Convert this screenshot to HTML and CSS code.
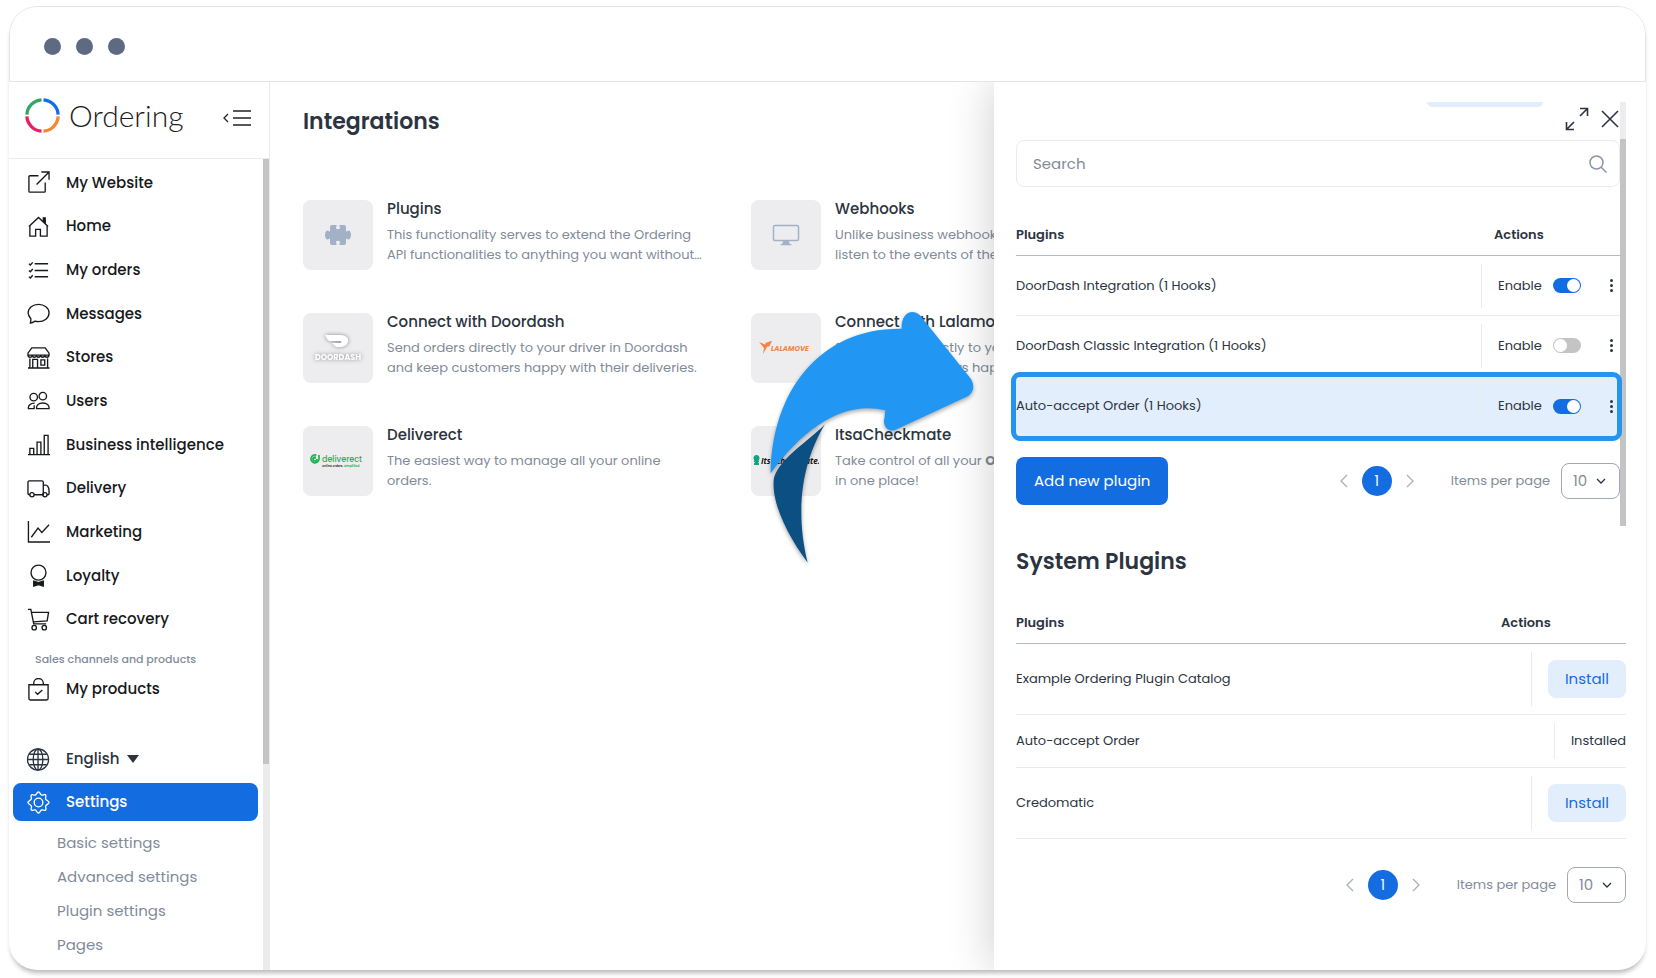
FILE: index.html
```
<!DOCTYPE html>
<html lang="en">
<head>
    <meta charset="UTF-8">
    <meta name="viewport" content="width=device-width, initial-scale=1.0">
    <title>Ordering - Integrations</title>
    <link rel="stylesheet" href="styles.css">
</head>
<body>
    <div class="window">
        <div class="titlebar">
            <span class="dot"></span>
            <span class="dot"></span>
            <span class="dot"></span>
        </div>
        <div class="app">
            <aside class="sidebar">
                <div class="brand">
                    <svg class="brand-mark" viewBox="0 0 36 36" fill="none" stroke-width="3.4">
                        <path d="M1.9 17A16.2 16.2 0 0 1 17 1.9" stroke="#34a567"/>
                        <path d="M19 1.9A16.2 16.2 0 0 1 34.1 17" stroke="#146de8"/>
                        <path d="M34.1 19A16.2 16.2 0 0 1 19 34.1" stroke="#f58634"/>
                        <path d="M17 34.1A16.2 16.2 0 0 1 1.9 19" stroke="#e91e63"/>
                    </svg>
                    <span class="brand-name">Ordering</span>
                    <button class="icon-btn collapse" aria-label="Collapse menu">
                        <svg width="28" height="16" viewBox="0 0 28 16" fill="none" stroke="#222" stroke-width="1.3"><path d="M5 4L1 8l4 4M10 1h18M10 8h18M10 15h18"/></svg>
                    </button>
                </div>
                <nav class="menu">
                    <ul class="menu-list">
                        <li><a href="#"><svg viewBox="0 0 24 24"><path d="M12 5H3a1 1 0 0 0-1 1v15a1 1 0 0 0 1 1h15a1 1 0 0 0 1-1v-9M15 1h8v8M23 1L10 14"/></svg>My Website</a></li>
                        <li><a href="#"><svg viewBox="0 0 24 24"><path d="M3 11v11h6v-7h5v7h7V11M2 12L12 2.500l10 9.500"/><path d="M17 3h2v5l-2-2z" fill="currentColor"/></svg>Home</a></li>
                        <li><a href="#"><svg viewBox="0 0 24 24"><path d="M8 5h14M8 12h14M8 18.500h14M2 5l1.500 1.300L6 3.500M2 12l1.500 1.300L6 10.500M2 18.500l1.500 1.300L6 17"/></svg>My orders</a></li>
                        <li><a href="#"><svg viewBox="0 0 24 24"><path d="M3.500 22c.3-1.700.8-3 .5-4.500C2.400 15.600 1.200 13.500 1.200 11.500 1.200 6.300 6 2.500 12 2.500s11 3.800 11 9-5 9-11 9c-1.200 0-2.400-.2-3.500-.5-1.500.9-3 1.800-5 2z"/></svg>Messages</a></li>
                        <li><a href="#"><svg viewBox="0 0 24 24"><path d="M5 2h14l4 5.500v2H1v-2zM1 9.500c0 3 4.400 3 4.400 0 0 3 4.400 3 4.400 0 0 3 4.400 3 4.400 0 0 3 4.400 3 4.400 0 0 3 4.400 3 4.400 0M3 13v10M21.500 13v10M1 23h22.500M6 23v-9h5v9M14.500 14.500h4V20h-4z"/></svg>Stores</a></li>
                        <li><a href="#"><svg viewBox="0 0 24 24"><circle cx="7" cy="8.500" r="3.900"/><circle cx="16.500" cy="7.500" r="3.900"/><path d="M8 20.500H1.500C1 17 3.500 14.800 8 14.800M10 20.500c-.5-3.700 2.400-5.900 6.500-5.900s7 2.200 6.500 5.900zM7.500 20.500V17"/></svg>Users</a></li>
                        <li><a href="#"><svg viewBox="0 0 24 24"><path d="M1 22.500h23M3 22.500v-6.500h4v6.500M10.500 22.500V9.500h4v13M18 22.500V2.500h4v20"/></svg>Business intelligence</a></li>
                        <li><a href="#"><svg viewBox="0 0 24 24"><path d="M3 18.500H2.500A1.500 1.500 0 0 1 1 17V5.500A1.500 1.500 0 0 1 2.500 4h13A1.500 1.500 0 0 1 17 5.500v13H7.500M17 8.500h2.500c2 0 3.500 3 3.500 5.500v3.500a1 1 0 0 1-1 1h-1"/><circle cx="5.200" cy="18.500" r="2.200"/><circle cx="18.700" cy="18.500" r="2.200"/></svg>Delivery</a></li>
                        <li><a href="#"><svg viewBox="0 0 24 24"><path d="M1.500 1v22H24M4.500 18l7-9.500 4 4.500L23 5"/></svg>Marketing</a></li>
                        <li><a href="#"><svg viewBox="0 0 24 24"><circle cx="12" cy="9" r="7.800"/><path d="M7 18l5 1.500 5-1.500v5l-5-1.500L7 23z" fill="currentColor"/></svg>Loyalty</a></li>
                        <li><a href="#"><svg viewBox="0 0 24 24"><path d="M1 1.500h3l3 15h13M4.800 4.500h17.700l-1.500 9L6.500 14.500"/><circle cx="7.500" cy="20.500" r="2.300"/><circle cx="18" cy="20.500" r="2.300"/></svg>Cart recovery</a></li>
                    </ul>
                    <p class="menu-label">Sales channels and products</p>
                    <a class="menu-link" href="#"><svg viewBox="0 0 24 24"><path d="M2 7h20v14.500a1.500 1.500 0 0 1-1.500 1.500h-17A1.500 1.500 0 0 1 2 21.500zM7 7V5.500a5 5 0 0 1 10 0V7M8.500 14.500l2.500 2.500 5-4.500"/></svg>My products</a>
                    <button class="menu-link language"><svg viewBox="0 0 24 24"><circle cx="11.500" cy="12" r="11"/><ellipse cx="11.500" cy="12" rx="5" ry="11"/><path d="M11.500 1v22M.5 12h22M2.500 6.500h18M2.500 17.500h18"/></svg>English<span class="caret"></span></button>
                    <a class="menu-link active" href="#"><svg viewBox="0 0 24 24"><circle cx="12" cy="12" r="4.500"/><path d="M12 1c1.600 0 1.700 2.600 3.200 3.200s3-1.300 4.200-.2-.6 2.800 0 4.300S23 10.200 23 12s-2.800 2-3.500 3.600 1.300 3-.1 4.200-2.700-.7-4.200 0S13.700 23 12 23s-1.800-2.600-3.300-3.200-2.900 1.200-4.100 0 .7-2.700 0-4.200S1 13.700 1 12s2.800-2 3.500-3.600-1.200-3 0-4.200 2.700.7 4.200 0S10.400 1 12 1z"/></svg>Settings</a>
                    <ul class="submenu">
                        <li><a href="#">Basic settings</a></li>
                        <li><a href="#">Advanced settings</a></li>
                        <li><a href="#">Plugin settings</a></li>
                        <li><a href="#">Pages</a></li>
                    </ul>
                    <div class="menu-scroll"><span></span></div>
                </nav>
            </aside>

            <main class="content">
                <h1>Integrations</h1>
                <div class="cards">
                    <article class="card">
                        <div class="thumb">
                            <svg width="26" height="22" viewBox="0 0 26 22" fill="#a3b1c6"><path d="M7 1h4.500v1.500c-1 .8-.7 2.800 1.500 2.800s2.500-2 1.500-2.800V1H19a2 2 0 0 1 2 2v4.500c.8.300 1.300-1 2.500-1S26 8.500 26 11s-1.300 4.500-2.500 4.500-1.700-1.300-2.500-1V19a2 2 0 0 1-2 2h-4.500v-1.500c1-.8.7-2.800-1.500-2.800s-2.500 2-1.500 2.800V21H7a2 2 0 0 1-2-2v-4.500c-.8-.3-1.300 1-2.500 1S0 13.500 0 11s1.300-4.500 2.500-4.500 1.700 1.300 2.500 1V3a2 2 0 0 1 2-2z"/></svg>
                        </div>
                        <div class="card-text">
                            <h2>Plugins</h2>
                            <p>This functionality serves to extend the Ordering<br>API functionalities to anything you want without…</p>
                        </div>
                    </article>
                    <article class="card">
                        <div class="thumb">
                            <svg width="28" height="22" viewBox="0 0 28 22"><rect x="1.500" y="1.500" width="25" height="15" rx="1.500" fill="none" stroke="#a3b1c6" stroke-width="1.500"/><path d="M11 17h6l.5 2.500 2 1v.8h-11v-.8l2-1z" fill="#a3b1c6"/></svg>
                        </div>
                        <div class="card-text">
                            <h2>Webhooks</h2>
                            <p>Unlike business webhooks<br>listen to the events of the</p>
                        </div>
                    </article>
                    <article class="card">
                        <div class="thumb">
                            <svg class="doordash" width="54" height="30" viewBox="0 0 54 30"><path d="M14 2h15c6 0 9 3 8 7-1 3-4 5-8 5h-3c-2 0-3-2-5-4h8c2 0 2-2 0-2H19c-2 0-3-2-5-6z"/><text x="27" y="27" text-anchor="middle">DOORDASH</text></svg>
                        </div>
                        <div class="card-text">
                            <h2>Connect with Doordash</h2>
                            <p>Send orders directly to your driver in Doordash<br>and keep customers happy with their deliveries.</p>
                        </div>
                    </article>
                    <article class="card">
                        <div class="thumb">
                            <svg class="lalamove" width="54" height="16" viewBox="0 0 54 16"><path d="M0 2l6 2.500L12 1l-1 4-3 2-4 7 1-6zM6 3l7-2-3 6z"/><text x="12" y="11">LALAMOVE</text></svg>
                        </div>
                        <div class="card-text">
                            <h2>Connect with Lalamove</h2>
                            <p>Send orders directly to your<br>and keep customers happy</p>
                        </div>
                    </article>
                    <article class="card">
                        <div class="thumb">
                            <svg class="deliverect" width="56" height="14" viewBox="0 0 56 14"><path d="M6.500 1.200A4 4 0 1 0 9 5V1M7 5a2 2 0 1 1-2-2v2" fill="none" stroke="#1fb254" stroke-width="1.700"/><text class="name" x="12" y="8">deliverect</text><text class="tag" x="12" y="13">Online orders. <tspan>Simplified.</tspan></text></svg>
                        </div>
                        <div class="card-text">
                            <h2>Deliverect</h2>
                            <p>The easiest way to manage all your online<br>orders.</p>
                        </div>
                    </article>
                    <article class="card">
                        <div class="thumb">
                            <svg class="checkmate" width="66" height="14" viewBox="0 0 66 14"><path d="M1 11h5v-1.500L5 8h1V6.500H5.200A3 3 0 1 0 1.800 6.500H1V8h1L1 9.500z" fill="#12a383"/><text x="8" y="10">ItsaCheckmate.</text></svg>
                        </div>
                        <div class="card-text">
                            <h2>ItsaCheckmate</h2>
                            <p>Take control of all your <b>Orders</b><br>in one place!</p>
                        </div>
                    </article>
                </div>
            </main>

            <svg class="arrow" width="205" height="255" viewBox="150 390 615 765">
                <path d="M315 730C260 820 218 960 263 1145C200 1060 152 960 162 890C182 830 260 785 315 730z" fill="#0b4f83"/>
                <path d="M152 877C155 630 300 440 545 443C543 400 573 380 600 403L750 590C766 610 762 637 740 647L525 747C505 755 487 735 493 713L496 688C375 658 255 735 152 877z" fill="#2196f3"/>
            </svg>

            <section class="drawer">
                <div class="drawer-tools">
                    <button class="icon-btn" aria-label="Expand">
                        <svg width="24" height="24" viewBox="0 0 24 24" fill="none" stroke="#2c3440" stroke-width="1.600"><path d="M15 1.500h7.500V9M22.500 1.500L15 9M1.500 15v7.500H9M1.500 22.500L9 15"/></svg>
                    </button>
                    <button class="icon-btn" aria-label="Close">
                        <svg width="18" height="18" viewBox="0 0 18 18" fill="none" stroke="#2c3440" stroke-width="1.600"><path d="M1 1l16 16M17 1L1 17"/></svg>
                    </button>
                </div>
                <div class="scroll-area">
                    <div class="scroll-body">
                        <div class="chip"></div>
                        <label class="search">
                            <input type="text" placeholder="Search" aria-label="Search plugins">
                            <svg width="18" height="18" viewBox="0 0 18 18" fill="none" stroke="#8d97a5" stroke-width="1.500"><circle cx="7.500" cy="7.500" r="6.500"/><path d="M12 12l5.500 5.500"/></svg>
                        </label>
                        <table class="plugins">
                            <thead>
                                <tr><th>Plugins</th><th class="actions">Actions</th></tr>
                            </thead>
                            <tbody>
                                <tr>
                                    <td>DoorDash Integration (1 Hooks)</td>
                                    <td><div class="row-actions"><label for="p1">Enable</label><input id="p1" class="switch" type="checkbox" checked><button class="icon-btn more" aria-label="More"><i></i><i></i><i></i></button></div></td>
                                </tr>
                                <tr>
                                    <td>DoorDash Classic Integration (1 Hooks)</td>
                                    <td><div class="row-actions"><label for="p2">Enable</label><input id="p2" class="switch" type="checkbox"><button class="icon-btn more" aria-label="More"><i></i><i></i><i></i></button></div></td>
                                </tr>
                                <tr class="highlight">
                                    <td>Auto-accept Order (1 Hooks)</td>
                                    <td><div class="row-actions"><label for="p3">Enable</label><input id="p3" class="switch" type="checkbox" checked><button class="icon-btn more" aria-label="More"><i></i><i></i><i></i></button></div></td>
                                </tr>
                            </tbody>
                        </table>
                        <div class="table-footer">
                            <button class="btn-primary">Add new plugin</button>
                            <div class="pager">
                                <button class="icon-btn" aria-label="Previous"><svg width="8" height="14" viewBox="0 0 8 14"><path d="M7 1L1 7l6 6"/></svg></button>
                                <button class="page">1</button>
                                <button class="icon-btn" aria-label="Next"><svg width="8" height="14" viewBox="0 0 8 14"><path d="M1 1l6 6-6 6"/></svg></button>
                                <label for="size1">Items per page</label>
                                <div class="select"><select id="size1"><option>10</option></select><svg width="10" height="6" viewBox="0 0 10 6"><path d="M1 1l4 4 4-4"/></svg></div>
                            </div>
                        </div>
                    </div>
                    <div class="scrollbar"></div>
                </div>

                <h2 class="section-title">System Plugins</h2>
                <table class="plugins system">
                    <thead>
                        <tr><th>Plugins</th><th class="actions">Actions</th></tr>
                    </thead>
                    <tbody>
                        <tr>
                            <td>Example Ordering Plugin Catalog</td>
                            <td><div class="install"><button class="btn-light">Install</button></div></td>
                        </tr>
                        <tr>
                            <td>Auto-accept Order</td>
                            <td><div class="install">Installed</div></td>
                        </tr>
                        <tr>
                            <td>Credomatic</td>
                            <td><div class="install"><button class="btn-light">Install</button></div></td>
                        </tr>
                    </tbody>
                </table>
                <div class="table-footer">
                    <div class="pager">
                        <button class="icon-btn" aria-label="Previous"><svg width="8" height="14" viewBox="0 0 8 14"><path d="M7 1L1 7l6 6"/></svg></button>
                        <button class="page">1</button>
                        <button class="icon-btn" aria-label="Next"><svg width="8" height="14" viewBox="0 0 8 14"><path d="M1 1l6 6-6 6"/></svg></button>
                        <label for="size2">Items per page</label>
                        <div class="select"><select id="size2"><option>10</option></select><svg width="10" height="6" viewBox="0 0 10 6"><path d="M1 1l4 4 4-4"/></svg></div>
                    </div>
                </div>
            </section>
        </div>
    </div>
</body>
</html>
```
FILE: styles.css
```
*{
    margin: 0;
    padding: 0;
    box-sizing: border-box;
}
body{
    display: flex;
    min-height: 100vh;
    padding: 6px 10px 8px 9px;
    background-color: #fff;
    font-family: Poppins, Inter, "Liberation Sans", sans-serif;
    font-size: 14px;
    line-height: 20px;
    color: #2c3440;
}
button, input, select{
    font: inherit;
    color: inherit;
    background: none;
    border: none;
}
button{
    cursor: pointer;
}
a{
    color: inherit;
    text-decoration: none;
}
ul{
    list-style: none;
}
.icon-btn{
    display: flex;
}

/* browser frame */
.window{
    flex: 1;
    display: flex;
    flex-direction: column;
    min-width: 0;
    border-radius: 28px;
    box-shadow: 0 5px 5px -2px rgba(0, 0, 0, .28);
    overflow: hidden;
}
.titlebar{
    display: flex;
    align-items: center;
    gap: 15px;
    height: 76px;
    padding: 4px 0 0 34px;
    border: 1px solid #e2e5e8;
    border-radius: 28px 28px 0 0;
}
.dot{
    width: 17px;
    height: 17px;
    border-radius: 50%;
    background-color: #5d6a81;
}
.app{
    position: relative;
    flex: 1;
    display: flex;
}

/* sidebar */
.sidebar{
    flex: 0 0 261px;
    display: flex;
    flex-direction: column;
    border-right: 1px solid #e9ecef;
}
.brand{
    display: flex;
    align-items: center;
    height: 77px;
    padding: 0 18px 10px 16px;
    border-bottom: 1px solid #e9ecef;
}
.brand-mark{
    width: 35px;
    height: 35px;
}
.brand-name{
    margin-left: 9px;
    font-family: Lato, sans-serif;
    font-weight: 300;
    font-size: 30px;
    line-height: 36px;
    color: #1c1c1c;
}
.collapse{
    margin: 6px 0 0 auto;
}
.menu{
    position: relative;
    flex: 1;
    padding: 2px 11px 0 4px;
    font-size: 15px;
    font-weight: 500;
    color: #17191c;
}
.menu-list{
    display: grid;
    grid-auto-rows: 1fr;
    height: 480px;
}
.menu-list a, .menu-link{
    display: flex;
    align-items: center;
    gap: 16px;
    width: 100%;
    height: 38px;
    padding: 0 14px;
    border-radius: 8px;
}
.menu-list li{
    display: flex;
    align-items: center;
}
.menu svg{
    width: 23px;
    height: 23px;
    fill: none;
    stroke: currentColor;
    stroke-width: 1.4;
}
.menu-label{
    padding: 8px 22px 1px;
    font-size: 11px;
    color: #818b99;
}
.language{
    margin: 32px 0 5px;
    color: #2c3440;
}
.caret{
    margin-left: -8px;
    border: 6px solid transparent;
    border-top: 8px solid #2c3440;
    border-bottom: none;
}
.menu .active{
    background-color: #146de0;
    color: #fff;
}
.submenu{
    padding: 5px 0 0 44px;
    font-weight: 400;
    color: #818b99;
}
.submenu a{
    display: block;
    line-height: 34px;
}
.menu-scroll{
    position: absolute;
    top: 0;
    right: 0;
    bottom: 0;
    width: 6px;
    background-color: #ebebeb;
}
.menu-scroll span{
    display: block;
    height: 605px;
    background-color: #c4c4c4;
}

/* integrations */
.content{
    flex: 1;
    min-width: 0;
    padding: 24px 0 0 33px;
    overflow: hidden;
}
h1, .section-title{
    font-size: 22px;
    line-height: 32px;
    font-weight: 600;
}
.cards{
    display: grid;
    grid-template-columns: repeat(2, 424px);
    gap: 43px 24px;
    margin-top: 62px;
}
.card{
    display: flex;
    gap: 14px;
    white-space: nowrap;
}
.thumb{
    flex: 0 0 70px;
    height: 70px;
    display: flex;
    align-items: center;
    justify-content: center;
    border-radius: 8px;
    background-color: #ededef;
}
.card h2{
    margin-bottom: 7px;
    font-size: 15px;
    line-height: 18px;
    font-weight: 500;
}
.card p{
    font-size: 13px;
    color: #818b99;
}
.doordash{
    filter: drop-shadow(0 0 2px #888);
    fill: #fff;
    font-size: 8px;
    font-weight: 700;
}
.lalamove{
    fill: #f58345;
    font-size: 7px;
    font-weight: 700;
    font-style: italic;
}
.deliverect .name{
    fill: #1fb254;
    font-size: 8px;
    font-weight: 500;
}
.deliverect .tag{
    fill: #333;
    font-size: 3px;
    font-weight: 600;
}
.deliverect tspan{
    fill: #1fb254;
}
.checkmate{
    fill: #111;
    font-family: "Open Sans", sans-serif;
    font-size: 8px;
    font-weight: 700;
    font-style: italic;
}
.arrow{
    position: absolute;
    left: 761px;
    top: 229px;
    z-index: 2;
    filter: drop-shadow(0 2px 2px rgba(0, 0, 0, .35));
    overflow: visible;
}

/* plugins drawer */
.drawer{
    position: relative;
    flex: 0 0 652px;
    padding: 20px 20px 0 22px;
    background-color: #fff;
    box-shadow: 0 0 44px rgba(0, 0, 0, .2);
    clip-path: inset(0 0 0 -60px);
}
.drawer-tools{
    position: absolute;
    top: 25px;
    right: 27px;
    display: flex;
    align-items: center;
    gap: 12px;
}
.scroll-area{
    display: flex;
    height: 424px;
}
.scroll-body{
    flex: 1;
}
.scrollbar{
    width: 6px;
    margin-top: 37px;
    background-color: #c4c4c4;
    box-shadow: 0 -37px 0 #ededef;
}
.chip{
    width: 116px;
    height: 5px;
    margin: 0 77px 33px auto;
    border-radius: 0 0 8px 8px;
    background-color: #e3eefc;
}
.search{
    display: flex;
    align-items: center;
    height: 47px;
    padding: 0 12px 0 16px;
    border: 1px solid #e9ecef;
    border-radius: 8px;
    font-size: 15px;
}
.search input{
    flex: 1;
    outline: none;
}
.search input::placeholder{
    color: #818b99;
}
.plugins{
    width: 100%;
    margin-top: 27px;
    border-collapse: separate;
    border-spacing: 0;
    table-layout: fixed;
    font-size: 13px;
}
.plugins th{
    height: 42px;
    text-align: left;
    font-weight: 600;
    border-bottom: 1px solid #b1bcc9;
}
.plugins th.actions{
    width: 139px;
    padding-left: 13px;
}
.plugins td{
    height: 60px;
    border-bottom: 1px solid #e9ecef;
}
.row-actions{
    display: flex;
    align-items: center;
    height: 44px;
    padding: 0 7px 0 16px;
    border-left: 1px solid #e9ecef;
}
.switch{
    appearance: none;
    width: 28px;
    height: 15px;
    margin-left: 11px;
    padding: 1px;
    border-radius: 8px;
    background-color: #c4c4c4;
}
.switch::before{
    content: "";
    display: block;
    width: 13px;
    height: 13px;
    border-radius: 50%;
    background-color: #fff;
}
.switch:checked{
    background-color: #146de0;
}
.switch:checked::before{
    margin-left: auto;
}
.more{
    flex-direction: column;
    gap: 2px;
    margin-left: auto;
}
.more i{
    width: 3px;
    height: 3px;
    border-radius: 50%;
    background-color: #2c3440;
}
.highlight{
    position: relative;
    z-index: 0;
}
.highlight td{
    border-bottom: none;
}
.highlight td:first-child::before{
    content: "";
    position: absolute;
    z-index: -1;
    inset: -4px -2px -5px -5px;
    border: 5px solid #2494ee;
    border-radius: 9px;
    background-color: #e3eefc;
}
.table-footer{
    display: flex;
    align-items: center;
    justify-content: space-between;
    margin-top: 21px;
}
.btn-primary{
    height: 48px;
    padding: 0 18px;
    border-radius: 8px;
    background-color: #146de0;
    color: #fff;
    font-size: 15px;
}
.pager{
    display: flex;
    align-items: center;
    margin-left: auto;
    font-size: 13px;
    color: #818b99;
}
.pager svg{
    fill: none;
    stroke: #a9b0ba;
    stroke-width: 1.3;
}
.page{
    width: 30px;
    height: 30px;
    margin: 0 14px;
    border-radius: 50%;
    background-color: #146de0;
    color: #fff;
    font-size: 14px;
}
.pager label{
    margin: 0 11px 0 37px;
}
.select{
    position: relative;
}
.select select{
    display: block;
    appearance: none;
    width: 59px;
    height: 36px;
    padding-left: 11px;
    border: 1px solid #a0a8b4;
    border-radius: 8px;
    font-size: 15px;
}
.pager .select svg{
    position: absolute;
    right: 14px;
    top: 15px;
    stroke: #2c3440;
    pointer-events: none;
}
.section-title{
    margin-top: 20px;
}
.system{
    margin-top: 24px;
}
.plugins.system .actions{
    padding-left: 14px;
}
.system td{
    padding: 8px 0;
    height: auto;
}
.install{
    width: fit-content;
    margin-left: auto;
    padding: 8px 0 8px 16px;
    border-left: 1px solid #e9ecef;
}
.btn-light{
    height: 38px;
    padding: 0 17px;
    border-radius: 8px;
    background-color: #e3eefc;
    color: #146de0;
    font-size: 15px;
}
.system + .table-footer{
    margin-top: 28px;
}
```
